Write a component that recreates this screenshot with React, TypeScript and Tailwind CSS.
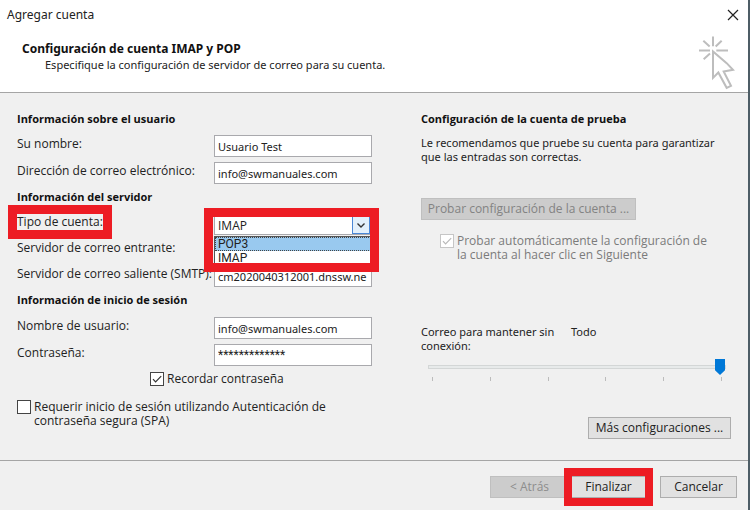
import { useState } from "react";
import type { ReactNode } from "react";

const ACCOUNT_TYPES = ["POP3", "IMAP"];

const inputClass = "h-[22px] w-full border border-[#a9a9ad] bg-white leading-[16px] text-[#222] outline-none";

function Heading({ children }: { children: ReactNode }) {
  return <h2 className="text-[11px] font-bold leading-[18px] text-[#111]">{children}</h2>;
}

function Row({ id, label, children }: { id: string; label: ReactNode; children: ReactNode }) {
  return (
    <div className="grid grid-cols-[197px_158px] items-start">
      <label htmlFor={id} className="whitespace-nowrap text-[12px] leading-[18px]">{label}</label>
      {children}
    </div>
  );
}

function TextRow({ id, label, initial, font = "font-['Noto_Sans',sans-serif] text-[11px]" }: {
  id: string; label: string; initial: string; font?: string;
}) {
  const [value, setValue] = useState(initial);
  return (
    <Row id={id} label={label}>
      <input id={id} type="text" autoComplete="off" value={value} onChange={(e) => setValue(e.target.value)} className={`${inputClass} pl-[3px] ${font}`} />
    </Row>
  );
}

function Check({ id, checked, disabled, onChange, children }: {
  id: string; checked: boolean; disabled?: boolean; onChange?: (v: boolean) => void; children: ReactNode;
}) {
  return (
    <div className="flex items-start gap-[3px]">
      <span className="relative size-[14px] shrink-0">
        <input
          id={id}
          type="checkbox"
          checked={checked}
          disabled={disabled}
          onChange={(e) => onChange?.(e.target.checked)}
          className="block size-[14px] appearance-none border border-[#444] bg-white disabled:border-[#c6c6c6]"
        />
        {checked && (
          <svg viewBox="0 0 14 14" className={`pointer-events-none absolute inset-0 size-[14px] ${disabled ? "text-[#b9b9b9]" : "text-[#333]"}`}>
            <path d="M3 7.2 5.6 10 11.2 4.2" fill="none" stroke="currentColor" strokeWidth="1.2" />
          </svg>
        )}
      </span>
      <label htmlFor={id} className={`text-[12px] leading-[14px] ${disabled ? "text-[#7b7b7b]" : ""}`}>{children}</label>
    </div>
  );
}

function AccountType() {
  const [type, setType] = useState("IMAP");
  return (
    <div className="relative">
      <select id="type" value={type} onChange={(e) => setType(e.target.value)} className={`${inputClass} appearance-none px-[3px] pt-[3px] text-[12px]`}>
        {ACCOUNT_TYPES.map((t) => <option key={t}>{t}</option>)}
      </select>
      <span className="pointer-events-none absolute right-[2px] top-[3px] flex h-[18px] w-[18px] items-center justify-center border border-[#4a87d6] bg-[#e3f0fb]">
        <svg viewBox="0 0 10 10" className="size-[10px]">
          <path d="M1.5 3.5 5 7 8.5 3.5" fill="none" stroke="#333" strokeWidth="1.4" />
        </svg>
      </span>
      <ul role="listbox" aria-label="Tipo de cuenta" className="absolute inset-x-0 top-[23px] z-10 border border-[#555] bg-white font-[Roboto,sans-serif] text-[12px] leading-[14px]">
        {ACCOUNT_TYPES.map((t) => (
          <li
            key={t}
            role="option"
            aria-selected={t === "POP3"}
            onClick={() => setType(t)}
            className="px-[3px] aria-selected:bg-[#99c9ef] aria-selected:outline-1 aria-selected:-outline-offset-1 aria-selected:outline-dotted aria-selected:outline-[#444]"
          >
            {t}
          </li>
        ))}
      </ul>
      <span className="pointer-events-none absolute -left-[10px] -top-[5px] z-20 h-[64px] w-[175px] border-[9px] border-[#ed1c24]" />
    </div>
  );
}

function CursorIcon() {
  return (
    <svg viewBox="174 104 114 164" className="h-[55px] w-[38px]" fill="none" stroke="#bdbdbd" strokeWidth="6">
      <path d="M219 108v29M177 150h33M229 150h35M190 121l19 17M245 121l-18 17M191 176l19-17" />
      <path d="M219 153v79l16-16 25 46 13-6-22-43 28-5-19-20z" />
    </svg>
  );
}

export default function App() {
  const [remember, setRemember] = useState(true);
  const [spa, setSpa] = useState(false);
  const [keep, setKeep] = useState(5);

  return (
    <div className="flex min-h-screen flex-col border-r-2 border-[#4d5d66] bg-[#f0f0f0] font-['Open_Sans',sans-serif] text-[12px] text-[#222]">
      <header className="border-b border-[#a5a5a5] bg-white">
        <div className="flex h-[30px] items-center justify-between pl-[7px] pr-[9px]">
          <h1 className="font-['Noto_Sans',sans-serif] text-[12px]">Agregar cuenta</h1>
          <button type="button" aria-label="Cerrar">
            <svg viewBox="0 0 12 12" className="size-[12px]" stroke="#222" strokeWidth="1.2">
              <path d="M1 1l10 10M11 1 1 11" />
            </svg>
          </button>
        </div>
        <div className="flex justify-between pl-[22px] pr-[12px]">
          <div className="pt-[11px] font-['Noto_Sans',sans-serif] leading-[16px]">
            <p className="text-[12px] font-bold text-[#111]">Configuración de cuenta IMAP y POP</p>
            <p className="pl-[23px] text-[11px]">Especifique la configuración de servidor de correo para su cuenta.</p>
          </div>
          <div className="h-[62px] pt-[5px]"><CursorIcon /></div>
        </div>
      </header>

      <main className="grid grow grid-cols-[404fr_327fr] pb-[20px] pl-[17px] pt-[17px]">
        <div>
          <section>
            <Heading>Información sobre el usuario</Heading>
            <div className="mt-[7px] grid gap-[5px]">
              <TextRow id="name" label="Su nombre:" initial="Usuario Test" />
              <TextRow id="email" label="Dirección de correo electrónico:" initial="info@swmanuales.com" />
            </div>
          </section>
          <section className="mt-[4px]">
            <Heading>Información del servidor</Heading>
            <div className="mt-[7px] grid gap-[4px]">
              <Row
                id="type"
                label={
                  <span className="relative inline-block">
                    Tipo de cuenta:
                    <span className="pointer-events-none absolute -inset-x-[9px] -inset-y-[8px] border-[9px] border-[#ed1c24]" />
                  </span>
                }
              >
                <AccountType />
              </Row>
              <TextRow id="incoming" label="Servidor de correo entrante:" initial="" />
              <TextRow id="smtp" label="Servidor de correo saliente (SMTP):" initial="cm2020040312001.dnssw.ne" />
            </div>
          </section>
          <section className="mt-[4px]">
            <Heading>Información de inicio de sesión</Heading>
            <div className="mt-[8px] grid gap-[5px]">
              <TextRow id="user" label="Nombre de usuario:" initial="info@swmanuales.com" />
              <TextRow id="password" label="Contraseña:" initial="*************" font="font-[Roboto,sans-serif] text-[12px]" />
            </div>
          </section>
          <div className="mt-[6px] pl-[133px]">
            <Check id="remember" checked={remember} onChange={setRemember}>Recordar contraseña</Check>
          </div>
          <div className="mt-[14px] max-w-[330px]">
            <Check id="spa" checked={spa} onChange={setSpa}>
              Requerir inicio de sesión utilizando Autenticación de contraseña segura (SPA)
            </Check>
          </div>
        </div>

        <div className="flex flex-col pr-[17px]">
          <Heading>Configuración de la cuenta de prueba</Heading>
          <p className="mt-[8px] font-['Noto_Sans',sans-serif] text-[11px] leading-[14px]">
            Le recomendamos que pruebe su cuenta para garantizar que las entradas son correctas.
          </p>
          <button type="button" disabled className="mt-[34px] h-[22px] w-[215px] border border-[#bfbfbf] bg-[#cccccc] leading-[16px] text-[#838383]">
            Probar configuración de la cuenta ...
          </button>
          <div className="mt-[14px] max-w-[290px] pl-[19px]">
            <Check id="autotest" checked disabled>
              Probar automáticamente la configuración de la cuenta al hacer clic en Siguiente
            </Check>
          </div>
          <div className="mt-[63px] flex gap-[8px] font-['Noto_Sans',sans-serif] text-[11px] leading-[14px]">
            <label htmlFor="keep" className="w-[142px]">Correo para mantener sin conexión:</label>
            <output htmlFor="keep">{keep === 5 ? "Todo" : `${keep}`}</output>
          </div>
          <div className="mt-[6px] pl-[7px] pr-[5px]">
            <input
              id="keep"
              type="range"
              min={0}
              max={5}
              value={keep}
              onChange={(e) => setKeep(Number(e.target.value))}
              className="block h-[16px] w-full appearance-none bg-transparent [&::-webkit-slider-runnable-track]:h-[4px] [&::-webkit-slider-runnable-track]:border [&::-webkit-slider-runnable-track]:border-[#d3d6d6] [&::-webkit-slider-runnable-track]:bg-[#e7eaea] [&::-webkit-slider-thumb]:-mt-[7px] [&::-webkit-slider-thumb]:h-[16px] [&::-webkit-slider-thumb]:w-[10px] [&::-webkit-slider-thumb]:appearance-none [&::-webkit-slider-thumb]:bg-[#0078d7] [&::-webkit-slider-thumb]:[clip-path:polygon(0_0,100%_0,100%_70%,50%_100%,0_70%)]"
            />
            <div className="mt-[2px] flex justify-between px-[4px]">
              {[0, 1, 2, 3, 4, 5].map((n) => <span key={n} className="h-[4px] w-px bg-[#bcbcbc]" />)}
            </div>
          </div>
          <button type="button" className="mt-[36px] h-[22px] w-[143px] self-end border border-[#adadad] bg-[#e1e1e1] leading-[16px]">
            Más configuraciones ...
          </button>
        </div>
      </main>

      <footer className="flex h-[50px] items-start justify-end border-t border-[#a5a5a5] pr-[11px] pt-[15px]">
        <button type="button" disabled className="h-[22px] w-[79px] border border-[#bfbfbf] bg-[#cccccc] leading-[16px] text-[#8d8d8d]">&lt; Atrás</button>
        <div className="relative">
          <button type="button" className="h-[22px] w-[79px] border border-[#adadad] bg-[#e1e1e1] leading-[16px]">Finalizar</button>
          <span className="pointer-events-none absolute -inset-x-[5px] -inset-y-[8px] border-8 border-[#ed1c24]" />
        </div>
        <button type="button" className="ml-[12px] h-[22px] w-[77px] border border-[#adadad] bg-[#e1e1e1] leading-[16px]">Cancelar</button>
      </footer>
    </div>
  );
}
